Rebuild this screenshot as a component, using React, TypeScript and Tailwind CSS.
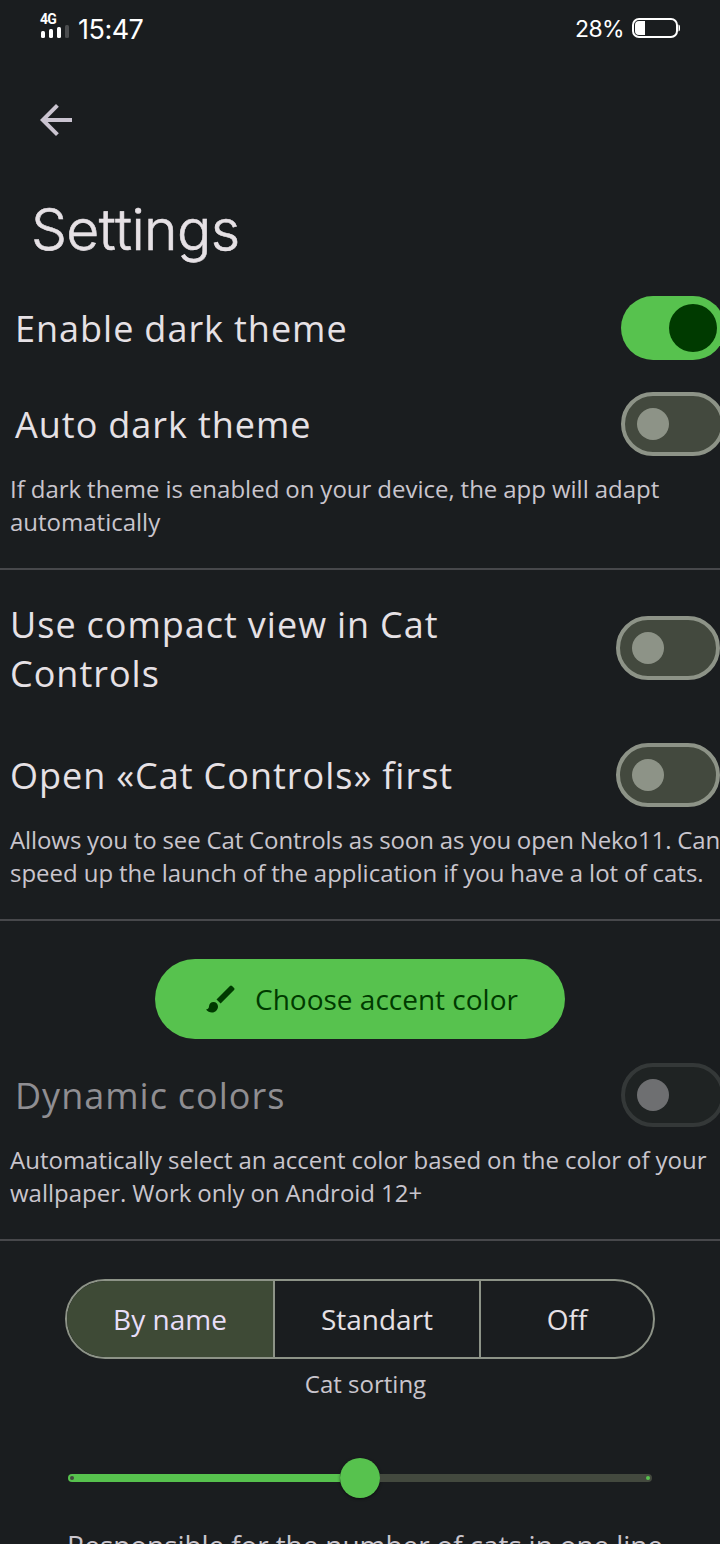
import type { ReactNode } from "react";

function Switch({ state = "off" }: { state?: "on" | "off" | "disabled" }) {
  if (state === "on") {
    return (
      <div className="flex h-16 w-[104px] shrink-0 items-center justify-end rounded-full bg-[#57c24e] pr-2">
        <div className="size-12 rounded-full bg-[#003a00]" />
      </div>
    );
  }
  const track =
    state === "disabled"
      ? "border-[#343838] bg-[#1f2323]"
      : "border-[#8d9387] bg-[#43493e]";
  const thumb = state === "disabled" ? "bg-[#6e6f71]" : "bg-[#8d9387]";
  return (
    <div className={`flex h-16 w-[104px] shrink-0 items-center rounded-full border-4 pl-3 ${track}`}>
      <div className={`size-8 rounded-full ${thumb}`} />
    </div>
  );
}

function Row({ children, className }: { children: ReactNode; className: string }) {
  return <div className={`flex shrink-0 items-center justify-between ${className}`}>{children}</div>;
}

function Title({ children, className = "" }: { children: ReactNode; className?: string }) {
  return (
    <div className={`whitespace-nowrap text-[36px] leading-[49px] tracking-[1px] [word-spacing:-0.4px] ${className}`}>
      {children}
    </div>
  );
}

function Note({ children, className = "" }: { children: ReactNode; className?: string }) {
  return (
    <p className={`shrink-0 whitespace-nowrap text-[#c9c5cd] ${className}`}>
      {children}
    </p>
  );
}

const smallNote = "pl-[10px] text-[24px] leading-[33px] [word-spacing:-0.3px]";

function Divider({ className }: { className: string }) {
  return <div className={`h-[2px] shrink-0 bg-[#47484b] ${className}`} />;
}

function StatusBar() {
  return (
    <div className="flex h-14 shrink-0 items-center justify-between pl-10 pr-[39px] font-['Inter'] text-white">
      <div className="flex items-center">
        <div className="-mt-[4px] flex w-[38px] flex-col">
          <span className="h-[10px] font-['Roboto'] text-[14px] font-bold leading-[10px] tracking-[-0.8px]">4G</span>
          <svg width="30" height="14" viewBox="0 0 30 14">
            <rect x="1" y="7" width="4" height="7" rx="1.5" fill="#fff" />
            <rect x="9" y="5" width="4" height="9" rx="1.5" fill="#fff" />
            <rect x="17" y="3" width="4" height="11" rx="1.5" fill="#fff" />
            <rect x="25" y="1" width="4" height="13" rx="1.5" fill="#4b4d4f" />
          </svg>
        </div>
        <span className="mt-1 text-[27px] leading-8 tracking-[-0.5px]">15:47</span>
      </div>
      <div className="flex items-center">
        <span className="mr-[8px] mt-px text-[23px] leading-8 tracking-[-0.6px]">28%</span>
        <svg width="49" height="20" viewBox="0 0 49 20">
          <rect x="1" y="1" width="44" height="18" rx="6" fill="none" stroke="#fff" strokeWidth="2" />
          <path d="M13 3v14H7a4 4 0 0 1-4-4V7a4 4 0 0 1 4-4z" fill="#fff" />
          <path d="M46.5 6.5c1.5.6 1.5 1.500 1.500 3.500s0 2.900-1.500 3.500z" fill="#fff" />
        </svg>
      </div>
    </div>
  );
}

export default function App() {
  return (
    <div className="flex h-[1544px] w-[720px] flex-col overflow-hidden bg-[#1a1d1f] font-['Open_Sans',sans-serif] text-[#e6e1e5]">
      <StatusBar />
      <button className="ml-8 mt-10 size-12 shrink-0" aria-label="Back">
        <svg viewBox="0 0 24 24" className="size-12" fill="#cac4d0">
          <path d="M20 11H7.830l5.590-5.590L12 4l-8 8 8 8 1.410-1.410L7.830 13H20v-2z" />
        </svg>
      </button>
      <h1 className="ml-[31px] mt-[50px] h-[72px] shrink-0 font-['Inter'] text-[57px] font-light leading-[72px] tracking-[-0.65px] [-webkit-text-stroke:0.6px_#e6e1e5] [font-kerning:none]">
        Settings
      </h1>

      <Row className="mt-[30px] h-16 pl-[15px]">
        <Title>Enable dark theme</Title>
        <div className="w-[99px]"><Switch state="on" /></div>
      </Row>
      <Row className="mt-8 h-16 pl-[15px]">
        <Title>Auto dark theme</Title>
        <div className="w-[99px]"><Switch /></div>
      </Row>
      <Note className={`mt-4 ${smallNote}`}>
        If dark theme is enabled on your device, the app will adapt
        <br />
        automatically
      </Note>
      <Divider className="mt-[30px]" />

      <Row className="mt-[30px] h-[98px] pl-[10px]">
        <Title>
          Use compact view in Cat
          <br />
          Controls
        </Title>
        <div className="pb-[2px]"><Switch /></div>
      </Row>
      <Row className="mt-[45px] h-16 pl-[10px]">
        <Title>Open «Cat Controls» first</Title>
        <Switch />
      </Row>
      <Note className={`mt-4 ${smallNote}`}>
        <span className="tracking-[-0.09px]">Allows you to see Cat Controls as soon as you open Neko11. Can</span>
        <br />
        speed up the launch of the application if you have a lot of cats.
      </Note>
      <Divider className="mt-[30px]" />

      <button className="mt-[38px] flex h-20 w-[410px] shrink-0 items-center self-center rounded-full bg-[#57c24e] pl-12 text-[28px] leading-[38px] text-[#003a00]">
        <svg viewBox="0 0 24 24" className="mr-4 size-9" fill="currentColor">
          <path d="M7 14c-1.660 0-3 1.340-3 3 0 1.310-1.160 2-2 2 .92 1.220 2.490 2 4 2 2.210 0 4-1.790 4-4 0-1.660-1.340-3-3-3zm13.710-9.370l-1.340-1.340a.996.996 0 0 0-1.410 0L9 12.250 11.750 15l8.960-8.960c.39-.39.39-1.020 0-1.410z" />
        </svg>
        Choose accent color
      </button>
      <Row className="mt-6 h-16 pl-[15px]">
        <Title className="text-[#8f8e92]">Dynamic colors</Title>
        <div className="w-[99px]"><Switch state="disabled" /></div>
      </Row>
      <Note className={`mt-4 ${smallNote}`}>
        Automatically select an accent color based on the color of your
        <br />
        wallpaper. Work only on Android 12+
      </Note>
      <Divider className="mt-[30px]" />

      <div className="mt-[38px] flex h-20 w-[590px] shrink-0 self-center overflow-hidden rounded-full border-2 border-[#8d9387] text-[28px]">
        <div className="flex w-[208px] items-center justify-center border-r-2 border-[#8d9387] bg-[#3e4a36] text-[#e8def8]">
          By name
        </div>
        <div className="flex w-[206px] items-center justify-center border-r-2 border-[#8d9387]">Standart</div>
        <div className="flex flex-1 items-center justify-center">Off</div>
      </div>
      <Note className="mt-2 self-center pl-[11px] text-[24px] leading-[33px]">Cat sorting</Note>

      <div className="mt-[58px] flex h-10 w-[584px] shrink-0 items-center self-center">
        <div className="flex h-2 w-[272px] items-center rounded-l-full bg-[#57c24e] pl-[2px]">
          <div className="size-1 rounded-full bg-[#43493e]" />
        </div>
        <div className="size-10 shrink-0 rounded-full bg-[#57c24e] shadow-[0_1px_3px_rgba(0,0,0,0.5)]" />
        <div className="flex h-2 w-[272px] items-center justify-end rounded-r-full bg-[#43493e] pr-[2px]">
          <div className="size-1 rounded-full bg-[#57c24e]" />
        </div>
      </div>
      <Note className="mt-[28px] pl-[67px] text-[28px] leading-[38px] tracking-[-0.05px] [word-spacing:-0.3px]">
        Responsible for the number of cats in one line
      </Note>
    </div>
  );
}
